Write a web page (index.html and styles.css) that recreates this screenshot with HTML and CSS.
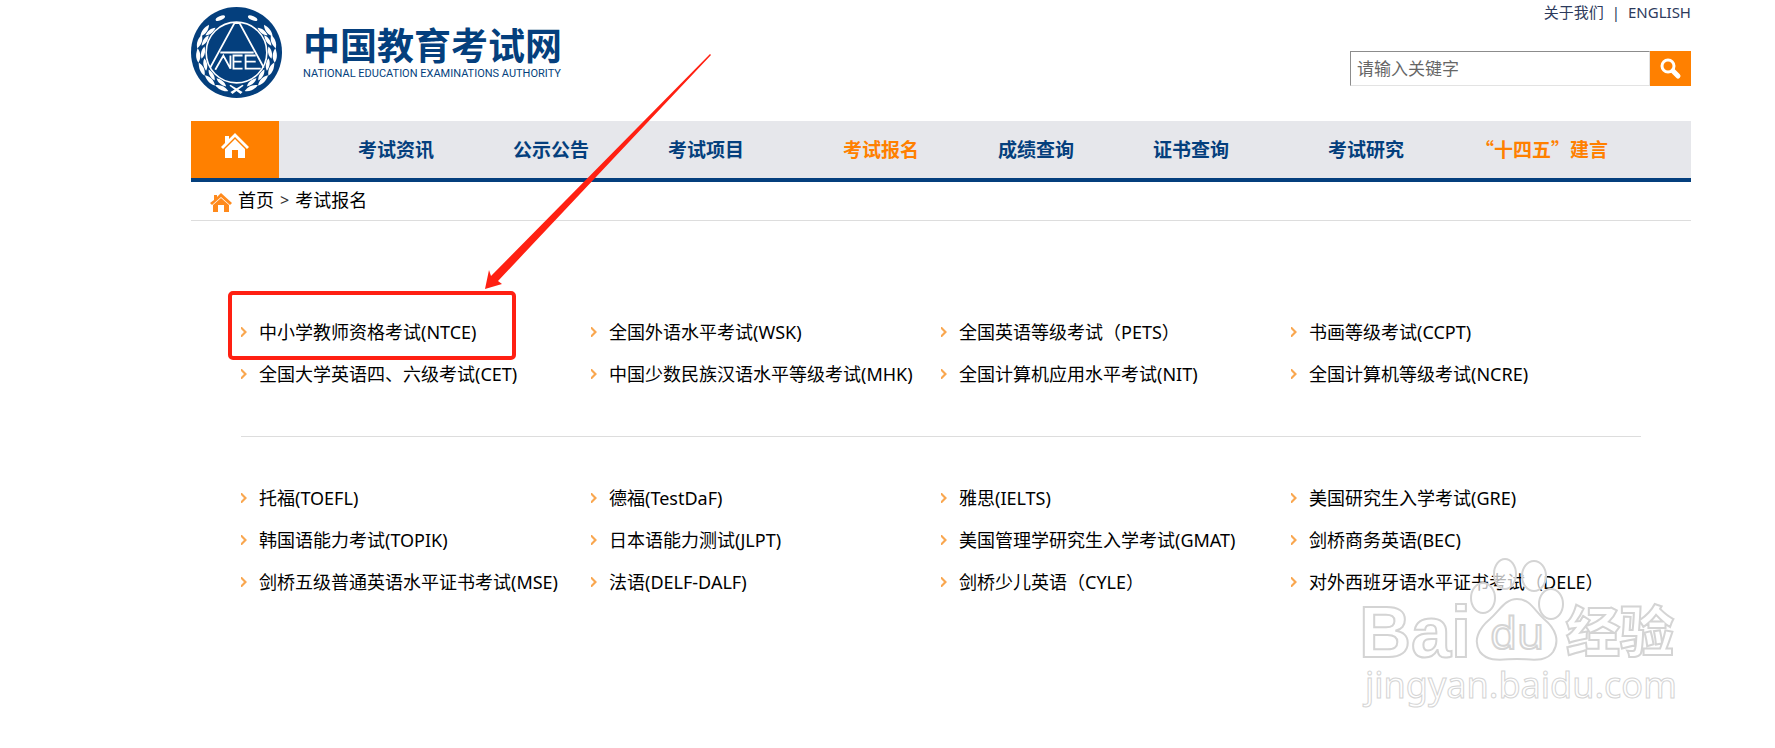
FILE: index.html
```html
<!DOCTYPE html>
<html lang="zh-CN">
<head>
<meta charset="utf-8">
<title>中国教育考试网</title>
<link rel="stylesheet" href="styles.css">
</head>
<body>
<div class="page">
  <header class="header">
    <a class="brand" href="#">
      <svg class="emblem" viewBox="0 0 90 90" aria-hidden="true">
        <defs>
          <g id="sprig">
            <path d="M45 84C41 80 36 79 31 81C35 84 40 86 45 84Z"/>
            <path d="M42 80C40 76 36 74 31 74C33 78 37 80 42 80Z"/>
          </g>
          <g id="branch">
            <use href="#sprig" transform="rotate(12 45 45)"/>
            <use href="#sprig" transform="rotate(33 45 45)"/>
            <use href="#sprig" transform="rotate(54 45 45)"/>
            <use href="#sprig" transform="rotate(75 45 45)"/>
            <use href="#sprig" transform="rotate(96 45 45)"/>
            <use href="#sprig" transform="rotate(114 45 45)"/>
            <path d="M49 86L38 78L39 77L51 84Z"/>
            <ellipse cx="29" cy="11" rx="5" ry="2" transform="rotate(-24 29 11)"/>
          </g>
        </defs>
        <circle cx="45" cy="45" r="45" fill="#043f7d"/>
        <g fill="#fff">
          <use href="#branch"/>
          <use href="#branch" transform="translate(90 0) scale(-1 1)"/>
        </g>
        <circle cx="45" cy="45" r="30" fill="#043f7d" stroke="#fff" stroke-width="1.6"/>
        <g fill="none" stroke="#fff" stroke-width="1.8">
          <path d="M19 60L43 16H48L72 60"/>
          <path d="M29 45H62"/>
          <path d="M24 62L32 48L39 61V48M51 48H42V61H51M42 54H50M64 48H54V61H69M54 54H64"/>
        </g>
      </svg>
      <span class="brand-text">
        <span class="brand-name">中国教育考试网</span>
        <span class="brand-sub">NATIONAL EDUCATION EXAMINATIONS AUTHORITY</span>
      </span>
    </a>
    <div class="tools">
      <div class="top-links"><a href="#">关于我们</a><span>|</span><a href="#">ENGLISH</a></div>
      <form class="search">
        <input class="search-input" type="text" placeholder="请输入关键字" aria-label="请输入关键字">
        <button class="search-button" type="button" aria-label="搜索">
          <svg width="22" height="22" viewBox="0 0 22 22" fill="none" stroke="#fff" stroke-linecap="round"><circle cx="8" cy="8" r="6" stroke-width="3"/><path d="M13 13L18 18" stroke-width="5"/></svg>
        </button>
      </form>
    </div>
  </header>

  <nav class="nav">
    <a class="nav-home" href="#" aria-label="首页">
      <svg width="28" height="26" viewBox="0 0 28 26"><path fill="#fff" d="M14 0L28 14L26 16L14 4L2 16L0 14L4 10V3H8V6ZM14 6L24 16V25H17V17H11V25H4V16Z"/></svg>
    </a>
    <div class="nav-groups">
      <div class="nav-group"><a href="#">考试资讯</a><a href="#">公示公告</a><a href="#">考试项目</a></div>
      <div class="nav-group"><a class="active" href="#">考试报名</a><a href="#">成绩查询</a><a href="#">证书查询</a></div>
      <div class="nav-group nav-group-last"><a href="#">考试研究</a><a class="active" href="#">“十四五”建言</a></div>
    </div>
  </nav>

  <div class="crumbs">
    <svg width="22" height="19" viewBox="0 0 22 19"><path fill="#ff8a1c" d="M11 0L22 10L20 12L11 4L2 12L0 10L4 7V2H7V4ZM11 5L19 12V19H14V12H8V19H3V12Z"/></svg>
    <a href="#">首页</a><span class="sep">&gt;</span><a href="#">考试报名</a>
  </div>

  <main class="exams">
    <ul class="exam-list">
      <li><a href="#">中小学教师资格考试(NTCE)</a></li>
      <li><a href="#">全国外语水平考试(WSK)</a></li>
      <li><a href="#">全国英语等级考试（PETS）</a></li>
      <li><a href="#">书画等级考试(CCPT)</a></li>
      <li><a href="#">全国大学英语四、六级考试(CET)</a></li>
      <li><a href="#">中国少数民族汉语水平等级考试(MHK)</a></li>
      <li><a href="#">全国计算机应用水平考试(NIT)</a></li>
      <li><a href="#">全国计算机等级考试(NCRE)</a></li>
    </ul>
    <ul class="exam-list">
      <li><a href="#">托福(TOEFL)</a></li>
      <li><a href="#">德福(TestDaF)</a></li>
      <li><a href="#">雅思(IELTS)</a></li>
      <li><a href="#">美国研究生入学考试(GRE)</a></li>
      <li><a href="#">韩国语能力考试(TOPIK)</a></li>
      <li><a href="#">日本语能力测试(JLPT)</a></li>
      <li><a href="#">美国管理学研究生入学考试(GMAT)</a></li>
      <li><a href="#">剑桥商务英语(BEC)</a></li>
      <li><a href="#">剑桥五级普通英语水平证书考试(MSE)</a></li>
      <li><a href="#">法语(DELF-DALF)</a></li>
      <li><a href="#">剑桥少儿英语（CYLE）</a></li>
      <li><a href="#">对外西班牙语水平证书考试（DELE）</a></li>
    </ul>
  </main>
</div>

<div class="mark-box"></div>
<svg class="mark-arrow" width="232" height="240" viewBox="0 0 232 240" aria-hidden="true"><path fill="#ff2012" d="M5 239L9 220L11 226L230 4L231 5L18 231L22 234Z"/></svg>

<svg class="watermark" width="340" height="170" viewBox="0 0 340 170" aria-hidden="true">
  <g class="wm-shape">
    <ellipse cx="133" cy="48" rx="12" ry="15"/>
    <ellipse cx="155" cy="24" rx="11" ry="15"/>
    <ellipse cx="184" cy="26" rx="12" ry="15"/>
    <ellipse cx="201" cy="54" rx="12" ry="15"/>
    <path d="M167 49C180 49 184 60 194 69C206 79 210 91 203 102C195 113 181 109 167 109C153 109 139 113 130 102C123 91 128 79 140 69C150 60 155 49 167 49Z"/>
  </g>
  <text class="wm-bai" x="9" y="107">Bai</text>
  <text class="wm-du" x="140" y="99">du</text>
  <text class="wm-cjk" x="216" y="102">经验</text>
  <text class="wm-url" x="15" y="148">jingyan.baidu.com</text>
</svg>
</body>
</html>
```
FILE: styles.css
```css
* { box-sizing: border-box; }
body {
  margin: 0;
  position: relative;
  min-height: 100vh;
  background: #fff;
  color: #000;
  font: 18px/24px "Noto Sans", "Noto Sans CJK SC", sans-serif;
}
a { color: inherit; text-decoration: none; }
.page { padding: 0 84px 140px 191px; }

.header { display: flex; justify-content: space-between; height: 121px; }
.brand { display: flex; gap: 21px; padding-top: 7px; color: #043f7d; }
.emblem { width: 91px; height: 91px; }
.brand-text { display: flex; flex-direction: column; padding-top: 14px; white-space: nowrap; }
.brand-name { font: 700 37px/46px "Noto Sans CJK SC", sans-serif; }
.brand-sub { font: 11px/14px Roboto, sans-serif; }

.tools { display: flex; flex-direction: column; align-items: flex-end; gap: 27px; }
.top-links { display: flex; gap: 8px; color: #2c3a5c; font-size: 15px; }
.search { display: flex; height: 35px; }
.search-input {
  width: 300px;
  padding: 0 6px;
  border: 1px solid;
  border-color: #8c8c8c #e3e3e3 #e3e3e3 #8c8c8c;
  outline: 0;
  font: 17px/24px "Noto Sans", "Noto Sans CJK SC", sans-serif;
}
.search-input::placeholder { color: #666; opacity: 1; }
.search-button { display: flex; align-items: center; justify-content: center; width: 41px; padding: 0; border: 0; background: #ff8000; }

.nav { display: flex; height: 61px; border-bottom: 4px solid #043f7d; background: #e6e7eb; }
.nav-home { display: flex; justify-content: center; width: 88px; padding-top: 12px; background: #ff8000; }
.nav-groups { display: flex; align-items: center; gap: 99px; padding: 0 0 2px 79px; }
.nav-group { display: flex; gap: 79px; color: #043f7d; font: bold 19px/28px "Noto Sans CJK SC", sans-serif; white-space: nowrap; }
.nav-group-last { gap: 71px; }
.active { color: #ff8000; }

.crumbs { display: flex; align-items: center; height: 39px; padding: 0 0 2px 19px; border-bottom: 1px solid #ddd; }
.crumbs svg { margin: 4px 6px 0 0; }
.sep { margin: 0 6px; font-size: 16px; color: #333; }

.exams { margin: 90px 50px 0; }
.exam-list { display: grid; grid-template-columns: repeat(4, 1fr); margin: 0; padding: 0; list-style: none; }
.exam-list + .exam-list { margin-top: 41px; padding-top: 40px; border-top: 1px solid #ddd; }
.exam-list li { display: flex; align-items: center; gap: 12px; height: 42px; white-space: nowrap; }
.exam-list li::before {
  content: "";
  width: 6px;
  height: 10px;
  background: #f9a750;
  clip-path: polygon(0 0, 1px 0, 6px 5px, 1px 10px, 0 10px, 0 8px, 3px 5px, 0 2px);
}

.mark-box { position: absolute; left: 228px; top: 291px; width: 288px; height: 69px; border: 4px solid #ff2012; border-radius: 5px; pointer-events: none; }
.mark-arrow { position: absolute; left: 480px; top: 50px; pointer-events: none; }

.watermark { position: absolute; left: 1350px; top: 550px; pointer-events: none; fill: #fff; stroke: #d4d4d4; stroke-width: 2px; }
.wm-shape { fill: #fff; fill-opacity: 0.7; }
.wm-bai { font: bold 72px "Liberation Sans", sans-serif; }
.wm-du { font: 44px "Noto Sans", sans-serif; }
.wm-cjk { font: 900 54px "Noto Sans CJK SC", sans-serif; }
.wm-url { font: 36px "Noto Sans", sans-serif; stroke-width: 1px; }
```
